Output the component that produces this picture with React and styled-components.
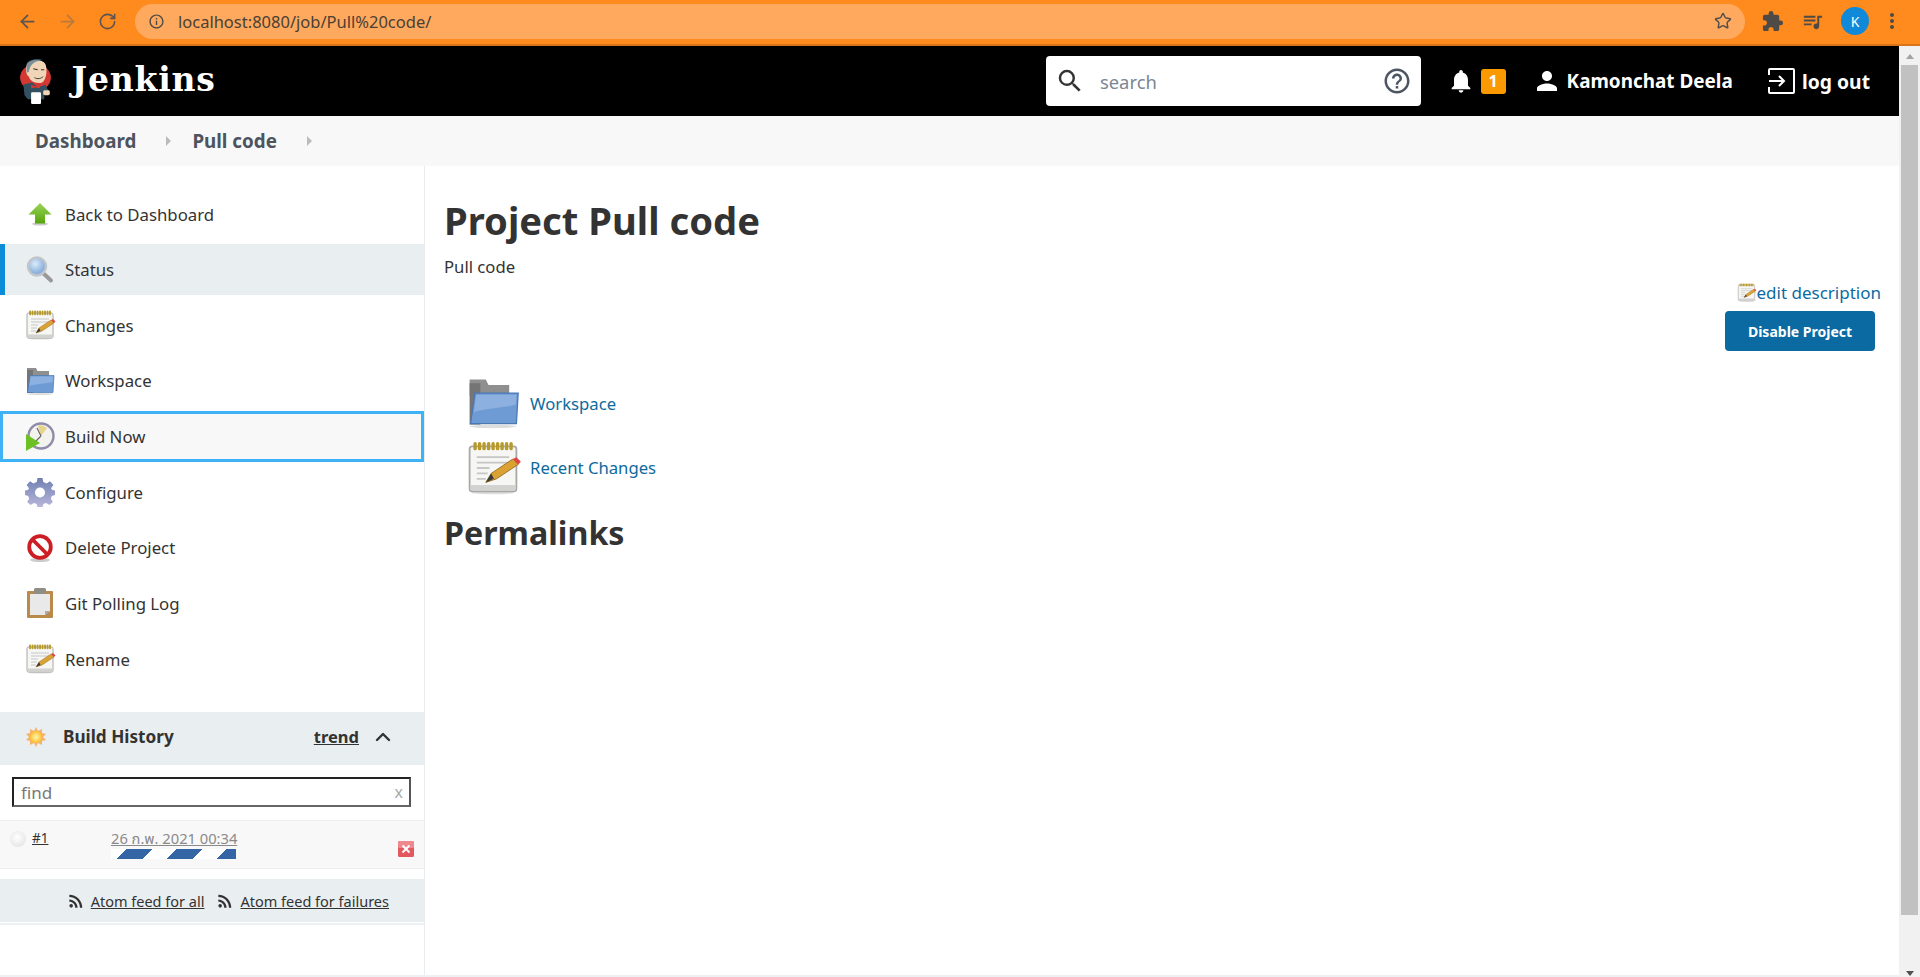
import React from 'react'
import styled, { createGlobalStyle } from 'styled-components'
import { ArrowLeft, ArrowRight, RotateCw, Star, ChevronUp } from 'lucide-react'
import { MdExtension, MdSearch, MdHelpOutline, MdNotifications, MdPerson, MdRssFeed, MdInfoOutline, MdQueueMusic, MdMoreVert } from 'react-icons/md'

const GlobalStyle = createGlobalStyle`
  html, body { margin: 0; padding: 0; background: #fff; overflow: hidden; }
  * { box-sizing: border-box; }
  body { font-family: "Noto Sans", "Open Sans", sans-serif; color: #333; }
`

const Arrow = () => (
  <svg width="26" height="26" viewBox="0 0 26 26">
    <defs><linearGradient id="ga" x1="0" y1="0" x2="0" y2="1"><stop offset="0" stopColor="#9bd45a" /><stop offset="1" stopColor="#55a50a" /></linearGradient></defs>
    <ellipse cx="13" cy="23" rx="8" ry="1.6" fill="#ccc" />
    <path d="M13 2 L24.5 13.5 H18 V22.5 H8 V13.5 H1.5 Z" fill="url(#ga)" />
  </svg>
)

const Magnifier = () => (
  <svg width="30" height="30" viewBox="0 0 30 30">
    <defs><radialGradient id="gm" cx="0.4" cy="0.35"><stop offset="0" stopColor="#dcebfa" /><stop offset="1" stopColor="#8db3dd" /></radialGradient></defs>
    <path d="M18 18 L26 25.5" stroke="#999" strokeWidth="4" strokeLinecap="round" />
    <circle cx="12" cy="11.5" r="9" fill="url(#gm)" stroke="#c2c5c9" strokeWidth="2.4" />
  </svg>
)

const rings = [4, 6.5, 9, 11.5, 14, 16.5, 19, 21.5, 24]

const Notepad = ({ size = 30 }) => (
  <svg width={size} height={size} viewBox="-1 0 30 30" overflow="visible">
    <ellipse cx="14" cy="28.6" rx="12" ry="1" fill="#ddd" />
    <rect x="1" y="3" width="26" height="25" rx="1.5" fill="#f6f6f4" stroke="#a8a8a6" />
    <rect x="1.5" y="24.5" width="25" height="3" fill="#d2d2d0" />
    {rings.map((x) => (
      <rect key={x} x={x - 0.9} y="0.6" width="1.9" height="4.6" rx="0.9" fill="#b79a2c" />
    ))}
    <path d="M5 9 H23 M5 12 H23 M5 15 H12 M5 18 H11 M5 21 H10" stroke="#c6c6c4" strokeWidth="1" />
    <path d="M10 23 L13 18 L25 10 L28 13 L16 21 Z" fill="#d9a233" stroke="#9a6d1e" strokeWidth="0.5" />
    <path d="M25 10 L28 13 L29.5 11.5 L27 9 Z" fill="#e04646" />
    <path d="M10 23 L13 18 L14.5 21 Z" fill="#3a3a3a" />
  </svg>
)

const Folder = ({ size = 30 }) => (
  <svg width={size} height={size} viewBox="0 0 30 30">
    <path d="M2 2 H11 L12.5 5 H24 V11 H2 Z" fill="#8f8f8f" />
    <rect x="2" y="4" width="6" height="23" fill="#757575" />
    <path d="M5 9.5 H29 L28 26.5 H2.5 Z" fill="#6f9bd4" stroke="#4b78b5" strokeWidth="0.7" />
    <path d="M5.6 10.4 H28 L27.6 16 C18 18 10 18 4.4 20 Z" fill="#8cb1e0" />
    <ellipse cx="15" cy="28" rx="13" ry="1" fill="#ddd" />
  </svg>
)

const Clock = () => (
  <svg width="30" height="30" viewBox="0 0 30 30">
    <circle cx="16" cy="14" r="12.5" fill="#f2f2ee" stroke="#8f8ba8" strokeWidth="2.4" />
    <path d="M16 14 L13 3.5 A10.5 10.5 0 0 1 22 6 Z" fill="#e6d48a" />
    <path d="M16 14 L12 6 M16 14 L11 19" fill="none" stroke="#666" strokeWidth="1.2" />
    <path d="M1 12 V29 L15 21 Z" fill="#6cc024" />
  </svg>
)

const Gear = () => (
  <svg width="30" height="30" viewBox="0 0 30 30">
    <defs><linearGradient id="gg" x1="0" y1="0" x2="0" y2="1"><stop offset="0" stopColor="#6f80b2" /><stop offset="1" stopColor="#b9b6da" /></linearGradient></defs>
    <path d="M12.5 1 H17.5 L18.3 5 L21.6 6.4 L25 4.2 L28.4 8 L26 11.2 L27.2 13 L30 13.5 V18 L26.8 19 L25.8 21.6 L27.8 25 L24.5 28 L21 26 L18.4 27 L17.5 30 H12.5 L11.6 27 L9 26 L5.5 28 L2.2 25 L4.2 21.6 L3.2 19 L0 18 V13.5 L3 13 L4 11.2 L1.6 8 L5 4.2 L8.4 6.4 L11.7 5 Z" fill="url(#gg)" />
    <circle cx="15" cy="15.5" r="5" fill="#fff" />
  </svg>
)

const NoEntry = () => (
  <svg width="28" height="30" viewBox="0 0 28 30">
    <ellipse cx="14" cy="27" rx="10" ry="2" fill="#ccc" />
    <circle cx="14" cy="14" r="10.8" fill="#fff" stroke="#cc1f25" strokeWidth="3.8" />
    <path d="M6.5 6.5 L21.5 21.5" stroke="#cc1f25" strokeWidth="3.8" />
  </svg>
)

const Clipboard = () => (
  <svg width="28" height="32" viewBox="0 0 28 32">
    <rect x="1" y="4" width="26" height="27" rx="1" fill="#b98a4c" />
    <path d="M4 7 H24 V24 L19 28 H4 Z" fill="#e9e9e9" />
    <path d="M19 28 L24 24 H19 Z" fill="#aaa" />
    <rect x="8" y="1" width="12" height="6" rx="1.5" fill="#8e8e86" />
  </svg>
)

const Sun = () => (
  <svg width="20" height="20" viewBox="0 0 20 20">
    <defs><radialGradient id="gs"><stop offset="0" stopColor="#fff6b0" /><stop offset="1" stopColor="#fbc02d" /></radialGradient></defs>
    <path d="M10 0 L12 4 L16 2 L16 6 L20 7 L17 10 L20 13 L16 14 L16 18 L12 16 L10 20 L8 16 L4 18 L4 14 L0 13 L3 10 L0 7 L4 6 L4 2 L8 4 Z" fill="#f6b26b" />
    <circle cx="10" cy="10" r="6" fill="url(#gs)" />
  </svg>
)

const LogoutIcon = () => (
  <svg width="28" height="26" viewBox="0 0 28 26" fill="none" stroke="#fff" strokeWidth="2">
    <path d="M1 7 V2 a1 1 0 0 1 1 -1 H25 a1 1 0 0 1 1 1 V24 a1 1 0 0 1 -1 1 H2 a1 1 0 0 1 -1 -1 V19" />
    <path d="M1 13 H16 M11 8 L16 13 L11 18" />
  </svg>
)

const JenkinsLogo = () => (
  <svg width="33" height="47" viewBox="0 0 30 48" preserveAspectRatio="none">
    <circle cx="15" cy="20" r="14" fill="#d33833" />
    <path d="M7 7 C8 1 21 0 24 6 C26 12 25 22 21 25 C16 27 10 24 9 19 C6 17 6 12 7 7 Z" fill="#f0d6b7" />
    <path d="M7 6 C9 1 18 0 21 2 C15 3 10 6 9 14 L7 15 Z" fill="#49728b" opacity="0.7" />
    <path d="M13 11 L17 12 M20 12 L23 12" stroke="#333" strokeWidth="1" />
    <path d="M14 20 C17 22 20 21 22 19" stroke="#333" strokeWidth="0.9" fill="none" />
    <path d="M4 27 L12 25 L17 30 L24 27 L27 34 L23 37 V42 H8 L5 38 Z" fill="#335061" />
    <path d="M11 27 L15 29 L19 27 L19 31 L15 30 L11 31 Z" fill="#d33833" />
    <rect x="11" y="35" width="9" height="12" rx="1" fill="#fff" />
    <rect x="22" y="33" width="6" height="5" rx="1.5" fill="#f0d6b7" />
  </svg>
)

const CloseRed = () => (
  <svg width="16" height="16" viewBox="0 0 16 16">
    <rect width="16" height="16" rx="1.5" fill="#e2595f" />
    <rect width="16" height="7" rx="1.5" fill="#ee8a8e" />
    <path d="M4.5 4.5 L11.5 11.5 M11.5 4.5 L4.5 11.5" stroke="#fff" strokeWidth="2" />
  </svg>
)

const navItems = [
  { label: 'Back to Dashboard', icon: <Arrow /> },
  { label: 'Status', icon: <Magnifier />, active: true },
  { label: 'Changes', icon: <Notepad /> },
  { label: 'Workspace', icon: <Folder /> },
  { label: 'Build Now', icon: <Clock />, focused: true },
  { label: 'Configure', icon: <Gear /> },
  { label: 'Delete Project', icon: <NoEntry /> },
  { label: 'Git Polling Log', icon: <Clipboard /> },
  { label: 'Rename', icon: <Notepad /> },
]

const App = () => {
  return (
    <Screen>
      <GlobalStyle />
      <BrowserBar>
        <BrowserButton><ArrowLeft size={21} /></BrowserButton>
        <BrowserButton $dim><ArrowRight size={21} /></BrowserButton>
        <BrowserButton><RotateCw size={19} /></BrowserButton>
        <AddressBar>
          <MdInfoOutline size={17} color="#4f4a46" />
          <AddressText>localhost:8080/job/Pull%20code/</AddressText>
          <Star size={18} color="#55504c" />
        </AddressBar>
        <Extensions>
          <MdExtension size={23} color="#4f4a46" />
          <MdQueueMusic size={23} color="#4f4a46" />
          <Avatar>K</Avatar>
          <MdMoreVert size={24} color="#4f4a46" />
        </Extensions>
      </BrowserBar>
      <Viewport>
        <Page>
          <Header>
            <Brand>
              <JenkinsLogo />
              <BrandName>Jenkins</BrandName>
            </Brand>
            <SearchBox>
              <MdSearch size={30} color="#333" />
              <SearchText>search</SearchText>
              <MdHelpOutline size={30} color="#4c5561" />
            </SearchBox>
            <Bell><MdNotifications size={28} color="#fff" /><Badge>1</Badge></Bell>
            <UserLink><MdPerson size={30} color="#fff" />Kamonchat Deela</UserLink>
            <LogoutLink><LogoutIcon />log out</LogoutLink>
          </Header>
          <Breadcrumbs>
            <Crumb>Dashboard</Crumb>
            <CrumbArrow />
            <Crumb>Pull code</Crumb>
            <CrumbArrow />
          </Breadcrumbs>
          <Body>
            <Sidebar>
              <NavList>
                {navItems.map((item) => (
                  <NavItem key={item.label} $active={item.active} $focused={item.focused}>
                    <NavIcon>{item.icon}</NavIcon>
                    {item.label}
                  </NavItem>
                ))}
              </NavList>
              <HistoryHead>
                <NavIconSmall><Sun /></NavIconSmall>
                <HistoryTitle>Build History</HistoryTitle>
                <Trend>trend</Trend>
                <ChevronUp size={24} color="#333" strokeWidth={2.4} />
              </HistoryHead>
              <FindWrap>
                <FindBox><span>find</span><FindClear>x</FindClear></FindBox>
              </FindWrap>
              <BuildRow>
                <Ball />
                <BuildNumber>#1</BuildNumber>
                <BuildInfo>
                  <BuildDate>26 ก.พ. 2021 00:34</BuildDate>
                  <Progress />
                </BuildInfo>
                <CloseSlot><CloseRed /></CloseSlot>
              </BuildRow>
              <FeedBar>
                <MdRssFeed size={20} color="#333" />
                <FeedLink>Atom feed for all</FeedLink>
                <MdRssFeed size={20} color="#333" />
                <FeedLink>Atom feed for failures</FeedLink>
              </FeedBar>
            </Sidebar>
            <Main>
              <Title>Project Pull code</Title>
              <Description>Pull code</Description>
              <EditRow>
                <Notepad size={19} />
                <BlueLink $size={17}>edit description</BlueLink>
              </EditRow>
              <ButtonRow>
                <DisableButton>Disable Project</DisableButton>
              </ButtonRow>
              <ProjectLinks>
                <ProjectLink><Folder size={54} /><BlueLink>Workspace</BlueLink></ProjectLink>
                <ProjectLink><Notepad size={54} /><BlueLink>Recent Changes</BlueLink></ProjectLink>
              </ProjectLinks>
              <Subtitle>Permalinks</Subtitle>
            </Main>
          </Body>
        </Page>
        <Scrollbar>
          <ScrollArrow $up />
          <ScrollThumb />
          <ScrollArrow />
        </Scrollbar>
      </Viewport>
    </Screen>
  )
}

const Screen = styled.div`
  width: 1920px;
  height: 977px;
  display: flex;
  flex-direction: column;
  overflow: hidden;
`

const BrowserBar = styled.div`
  height: 46px;
  flex: none;
  display: flex;
  align-items: center;
  padding: 0 0 2px 7px;
  background: #ff8a1d;
  border-bottom: 2px solid #d9741a;
`

const BrowserButton = styled.div`
  width: 40px;
  height: 26px;
  display: flex;
  align-items: center;
  justify-content: center;
  color: ${(p) => (p.$dim ? '#b97a3e' : '#5c5450')};
`

const AddressBar = styled.div`
  width: 1610px;
  height: 35px;
  margin-left: 8px;
  padding: 0 13px 0 13px;
  display: flex;
  align-items: center;
  background: #ffa95f;
  border-radius: 18px;
`

const AddressText = styled.span`
  flex: 1;
  margin-left: 13px;
  font-size: 16.5px;
  color: #4a4035;
`

const Extensions = styled.div`
  display: flex;
  align-items: center;
  gap: 17px;
  margin-left: 16px;
`

const Avatar = styled.div`
  width: 28px;
  height: 28px;
  margin-right: -6px;
  border-radius: 50%;
  background: #0f89d8;
  color: #fff;
  font-size: 14px;
  display: flex;
  align-items: center;
  justify-content: center;
`

const Viewport = styled.div`
  flex: 1;
  display: flex;
  min-height: 0;
`

const Page = styled.div`
  flex: 1;
  display: flex;
  flex-direction: column;
  min-width: 0;
`

const Header = styled.header`
  height: 70px;
  flex: none;
  display: flex;
  align-items: center;
  padding-left: 19px;
  background: #000;
  color: #fff;
`

const Brand = styled.div`
  display: flex;
  align-items: center;
  gap: 19.5px;
  margin-right: auto;
`

const BrandName = styled.span`
  padding-bottom: 4px;
  font-family: "DejaVu Serif", "Liberation Serif", serif;
  font-size: 33px;
  font-weight: 700;
  letter-spacing: 0.8px;
`

const SearchBox = styled.div`
  width: 375px;
  height: 50px;
  display: flex;
  align-items: center;
  padding: 0 9px 0 9px;
  background: #fff;
  border-radius: 4px;
`

const SearchText = styled.span`
  flex: 1;
  margin-left: 15px;
  font-size: 18.4px;
  color: #7b8694;
`

const Bell = styled.div`
  display: flex;
  align-items: center;
  margin-left: 25.7px;
`

const Badge = styled.span`
  width: 25px;
  height: 25px;
  margin-left: 6px;
  display: flex;
  align-items: center;
  justify-content: center;
  background: #fb9a00;
  border-radius: 3px;
  font-size: 16px;
  font-weight: 700;
`

const UserLink = styled.div`
  display: flex;
  align-items: center;
  gap: 5px;
  margin-left: 26px;
  font-size: 18.9px;
  font-weight: 700;
`

const LogoutLink = styled.div`
  display: flex;
  align-items: center;
  gap: 6px;
  margin: 0 29px 0 35.3px;
  font-size: 19.3px;
  font-weight: 700;
`

const Breadcrumbs = styled.nav`
  height: 50px;
  flex: none;
  display: flex;
  align-items: center;
  padding-left: 35px;
  background: #f8f8f8;
`

const Crumb = styled.span`
  font-size: 18.8px;
  font-weight: 700;
  color: #4d545d;
`

const CrumbArrow = styled.span`
  width: 0;
  height: 0;
  margin: 0 21px 0 30px;
  border-left: 5px solid #bbb;
  border-top: 5px solid transparent;
  border-bottom: 5px solid transparent;
`

const Body = styled.div`
  flex: 1;
  display: flex;
  min-height: 0;
  border-bottom: 2px solid #eef1f3;
`

const Sidebar = styled.aside`
  width: 425px;
  flex: none;
  border-right: 1px solid #e9edf0;
`

const NavList = styled.div`
  padding-top: 22.5px;
  margin-bottom: 27.5px;
  display: flex;
  flex-direction: column;
  gap: 4.65px;
`

const NavItem = styled.div`
  height: 51px;
  display: flex;
  align-items: center;
  padding-left: ${(p) => (p.$focused ? '22px' : '25px')};
  font-size: 16.8px;
  color: #333;
  ${(p) => p.$active && 'background: #e9eef1; border-left: 5px solid #0b8bd8; padding-left: 20px;'}
  ${(p) => p.$focused && 'background: #f8f8f8; border: 3px solid #3db3f5;'}
`

const NavIcon = styled.span`
  width: 30px;
  height: 32px;
  margin-right: 10px;
  display: flex;
  align-items: center;
  justify-content: center;
`

const NavIconSmall = styled.span`
  display: flex;
  margin-right: 17px;
`

const HistoryHead = styled.div`
  height: 53px;
  display: flex;
  align-items: center;
  padding: 0 29px 4px 26px;
  background: #e9eef1;
`

const HistoryTitle = styled.span`
  flex: 1;
  font-size: 17.2px;
  font-weight: 700;
  color: #333;
`

const Trend = styled.span`
  margin-right: 12px;
  font-size: 16.5px;
  font-weight: 700;
  text-decoration: underline;
`

const FindWrap = styled.div`
  padding: 12px 13px 13px 12px;
`

const FindBox = styled.div`
  height: 30px;
  display: flex;
  align-items: center;
  justify-content: space-between;
  padding: 0 6px 0 7px;
  border-width: 2px;
  border-style: solid;
  border-color: #222 #555 #666 #222;
  font-size: 17px;
  color: #777;
`

const FindClear = styled.span`
  font-size: 16px;
  color: #aaa;
`

const BuildRow = styled.div`
  height: 49px;
  display: flex;
  padding: 8px 10px 0 10px;
  background: #f8f8f8;
  border-top: 1px solid #eceeef;
  border-bottom: 1px solid #eceeef;
`

const Ball = styled.span`
  width: 16px;
  height: 16px;
  margin-top: 2px;
  border-radius: 50%;
  background: radial-gradient(circle at 45% 40%, #fff, #dedede);
`

const BuildNumber = styled.span`
  width: 79px;
  margin-left: 6px;
  font-size: 13.5px;
  text-decoration: underline;
`

const BuildInfo = styled.div`
  width: 127px;
  display: flex;
  flex-direction: column;
`

const BuildDate = styled.span`
  font-family: "Noto Sans", "Noto Sans Thai", "DejaVu Sans", sans-serif;
  font-size: 14.7px;
  line-height: 19px;
  color: #8a8a8a;
  text-decoration: underline;
  white-space: nowrap;
`

const Progress = styled.div`
  width: 125px;
  height: 10px;
  margin-top: 1px;
  background: repeating-linear-gradient(135deg, #fff 0 11.3px, #3465a4 11.3px 29px, #fff 29px 35.36px);
`

const CloseSlot = styled.div`
  margin: 11px 0 0 auto;
`

const FeedBar = styled.div`
  height: 44px;
  margin-top: 10px;
  display: flex;
  align-items: center;
  justify-content: flex-end;
  padding-right: 35px;
  background: #e9eef1;
  border-bottom: 1px solid #fff;
  box-shadow: 0 2px 0 #eef1f3;
`

const FeedLink = styled.span`
  margin: 0 11px 0 5px;
  font-size: 14.5px;
  text-decoration: underline;
  &:last-child { margin-right: 0; }
`

const Main = styled.main`
  flex: 1;
  min-width: 0;
  padding: 28px 18px 0 19px;
`

const Title = styled.h1`
  margin: 0;
  font-size: 38.2px;
  line-height: 52px;
  font-weight: 700;
  color: #333;
`

const Description = styled.div`
  margin-top: 10px;
  font-size: 16.7px;
  line-height: 22px;
`

const EditRow = styled.div`
  height: 24px;
  margin-top: 2px;
  display: flex;
  align-items: center;
  justify-content: flex-end;
`

const BlueLink = styled.span`
  font-size: ${(p) => p.$size || 16.7}px;
  color: #0d6aa0;
`

const ButtonRow = styled.div`
  display: flex;
  justify-content: flex-end;
  margin-top: 7px;
  padding-right: 6px;
`

const DisableButton = styled.div`
  width: 150px;
  height: 40px;
  display: flex;
  align-items: center;
  justify-content: center;
  background: #0b6aa2;
  border-radius: 4px;
  color: #fff;
  font-size: 14px;
  font-weight: 700;
`

const ProjectLinks = styled.div`
  margin-top: 25px;
  padding-left: 22px;
  display: flex;
  flex-direction: column;
  gap: 10.5px;
`

const ProjectLink = styled.div`
  height: 54px;
  display: flex;
  align-items: center;
  gap: 10px;
`

const Subtitle = styled.h2`
  margin: 16px 0 0;
  font-size: 32.2px;
  line-height: 44px;
  font-weight: 700;
  color: #333;
`

const Scrollbar = styled.div`
  width: 21px;
  flex: none;
  display: flex;
  flex-direction: column;
  align-items: center;
  background: #f1f1f1;
  padding: 0 2px 1px;
`

const ScrollArrow = styled.span`
  width: 0;
  height: 0;
  margin: ${(p) => (p.$up ? '8px 0 6px' : 'auto 0 0')};
  border-left: 4.5px solid transparent;
  border-right: 4.5px solid transparent;
  ${(p) => (p.$up ? 'border-bottom: 5px solid #a3a3a3;' : 'border-top: 5px solid #505050;')}
`

const ScrollThumb = styled.div`
  width: 100%;
  height: 850px;
  background: #c1c1c1;
`

export default App
